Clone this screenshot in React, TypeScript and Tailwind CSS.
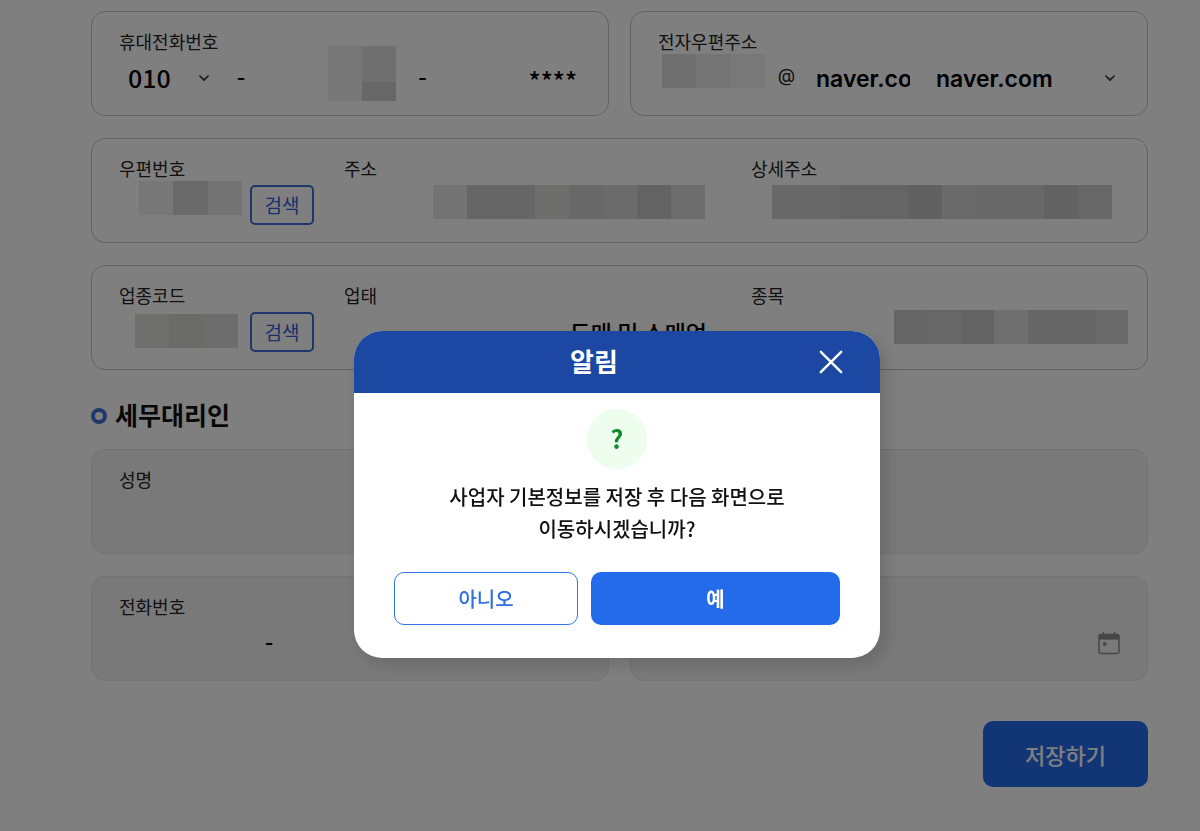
import { useState } from "react";
import type { ReactNode } from "react";

const INPUT = "h-10 min-w-0 bg-transparent text-black outline-none";

function IconChevron() {
  return (
    <svg
      width={12}
      height={8}
      viewBox="0 0 12 8"
      fill="none"
      aria-hidden
      className="pointer-events-none absolute top-4 right-1 text-[#444]"
      stroke="currentColor"
      strokeWidth={1.8}
      strokeLinecap="round"
      strokeLinejoin="round"
    >
      <path d="M2 2.2 6 6l4-3.8" />
    </svg>
  );
}

function IconCalendar() {
  return (
    <svg width={22} height={24} viewBox="0 0 22 24" fill="none" aria-hidden className="text-[#8c8c8c]">
      <rect x="1" y="3.5" width="20" height="19" rx="2" stroke="currentColor" strokeWidth="1.5" />
      <path d="M1 4h20v4.6H1z" fill="currentColor" />
      <path d="M5.5 1v4M16.5 1v4" stroke="currentColor" strokeWidth="1.5" />
      <circle cx="6.8" cy="13" r="1.9" fill="currentColor" />
    </svg>
  );
}

function IconClose() {
  return (
    <svg
      width={24}
      height={24}
      viewBox="0 0 24 24"
      fill="none"
      aria-hidden
      stroke="currentColor"
      strokeWidth={2.4}
      strokeLinecap="round"
    >
      <path d="M1.8 1.8l20.4 20.4M22.2 1.8L1.8 22.2" />
    </svg>
  );
}

/** Masked personal data: a row of flat blocks over the value */
function Mask({ cells, className }: { cells: string[]; className: string }) {
  return (
    <span className={`pointer-events-none absolute flex ${className}`} aria-hidden>
      {cells.map((cell, i) => (
        <span key={i} className={`flex-1 ${cell}`} />
      ))}
    </span>
  );
}

function Card({ children, disabled }: { children?: ReactNode; disabled?: boolean }) {
  return (
    <div
      className={`min-h-[105px] min-w-0 rounded-[14px] border px-[27px] pt-4 ${
        disabled ? "border-[#e6e6e6] bg-[#f3f3f3]" : "border-[#c4c4c4] bg-white"
      }`}
    >
      {children}
    </div>
  );
}

function Label({ htmlFor, children }: { htmlFor: string; children: ReactNode }) {
  return (
    <label htmlFor={htmlFor} className="mb-1 block text-[18px] leading-[26px] text-[#222]">
      {children}
    </label>
  );
}

function Dash() {
  return <span className="w-[54px] pb-1 text-center text-[24px] leading-8 font-medium">-</span>;
}

function SearchButton() {
  return (
    <button
      type="button"
      className="h-10 w-16 shrink-0 rounded-[5px] border-2 border-[#3a6fd8] text-[19px] leading-[34px] text-[#2f63d6]"
    >
      검색
    </button>
  );
}

function ConfirmDialog({ onClose }: { onClose: () => void }) {
  return (
    <div className="fixed inset-0 z-10 flex items-start justify-center overflow-hidden bg-black/50 pt-[331px] pl-[34px]">
      <div
        role="dialog"
        aria-modal="true"
        aria-labelledby="dialog-title"
        className="w-[526px] overflow-hidden rounded-[28px] bg-white shadow-[6px_6px_16px_0px_rgba(0,0,0,0.15)]"
      >
        <div className="flex h-[62px] items-center gap-[22px] bg-[#1c48a4] px-[37px] text-white">
          <h2 id="dialog-title" className="flex-1 pb-1 text-center text-[26px] font-bold">
            알림
          </h2>
          <button type="button" aria-label="닫기" onClick={onClose}>
            <IconClose />
          </button>
        </div>
        <div className="px-10 pt-4 pb-[33px] text-center">
          <div className="mx-auto flex size-[60px] items-center justify-center rounded-full bg-[#edfdee] text-[25px] font-bold text-[#108a2c]">
            ?
          </div>
          <p className="mt-3 text-[20px] leading-8 font-medium text-[#111]">
            사업자 기본정보를 저장 후 다음 화면으로
            <br />
            이동하시겠습니까?
          </p>
          <div className="mt-[27px] flex gap-[13px] text-[20px]">
            <button
              type="button"
              onClick={onClose}
              className="h-[53px] w-[184px] rounded-[10px] border border-[#2f76e8] font-medium text-[#2f6fe0]"
            >
              아니오
            </button>
            <button
              type="button"
              onClick={onClose}
              className="h-[53px] flex-1 rounded-[10px] bg-[#246beb] font-bold text-white"
            >
              예
            </button>
          </div>
        </div>
      </div>
    </div>
  );
}

export default function App() {
  const [open, setOpen] = useState(true);

  return (
    <div className="min-h-screen bg-white font-['Noto_Sans_CJK_KR',sans-serif]">
      <main className="pt-[11px] pr-[52px] pb-11 pl-[91px]">
        <div className="grid grid-cols-2 gap-[21px]">
          <Card>
            <Label htmlFor="mobile">휴대전화번호</Label>
            <div className="flex items-center text-[25px] font-medium">
              <div className="relative w-[95px] shrink-0">
                <select id="mobile" className={`${INPUT} w-full appearance-none pl-[9px]`}>
                  <option>010</option>
                </select>
                <IconChevron />
              </div>
              <Dash />
              <div className="relative min-w-0 flex-1">
                <input aria-label="휴대전화번호 가운데 자리" className={`${INPUT} w-full`} />
                <Mask
                  className="-top-3 right-0 h-[55px] w-[68px]"
                  cells={["bg-[#efefef]", "bg-linear-to-b from-[#e0e0e0] from-65% to-[#cfcfcf] to-65%"]}
                />
              </div>
              <Dash />
              <input
                aria-label="휴대전화번호 끝자리"
                defaultValue="****"
                className={`${INPUT} flex-1 pt-1 pr-1 text-right`}
              />
            </div>
          </Card>

          <Card>
            <Label htmlFor="email">전자우편주소</Label>
            <div className="flex items-center font-['Inter','Noto_Sans_CJK_KR',sans-serif] text-[23px] font-semibold">
              <div className="relative w-[107px] shrink-0">
                <input id="email" className={`${INPUT} w-full`} />
                <Mask
                  className="-top-1 right-0 h-[34px] w-[103px]"
                  cells={["bg-[#dedede]", "bg-[#e9e9e9]", "bg-[#f0f0f0]"]}
                />
              </div>
              <span className="w-[43px] pb-1 text-center text-[18px] leading-8 font-normal text-[#222]">@</span>
              <input
                aria-label="전자우편 도메인"
                defaultValue="naver.com"
                className={`${INPUT} w-[102px] pt-0.5 pl-2`}
              />
              <div className="relative ml-[18px] min-w-0 flex-1">
                <select
                  aria-label="도메인 선택"
                  className={`${INPUT} w-full appearance-none pt-0.5 pl-2`}
                >
                  <option>naver.com</option>
                </select>
                <IconChevron />
              </div>
            </div>
          </Card>
        </div>

        <div className="mt-[22px] grid gap-[22px]">
          <Card>
            <div className="grid grid-cols-[195px_377fr_369fr] gap-x-[30px]">
              <div>
                <Label htmlFor="zip">우편번호</Label>
                <div className="flex gap-2">
                  <div className="relative min-w-0 flex-1">
                    <input id="zip" className={`${INPUT} w-full`} />
                    <Mask
                      className="-top-1 right-0 h-[34px] w-[103px]"
                      cells={["bg-[#eeeeee]", "bg-[#d5d5d5]", "bg-[#e6e6e6]"]}
                    />
                  </div>
                  <SearchButton />
                </div>
              </div>
              <div>
                <Label htmlFor="addr">주소</Label>
                <div className="relative">
                  <input id="addr" className={`${INPUT} w-full`} />
                  <Mask
                    className="top-0 right-4 h-[34px] w-[272px]"
                    cells={[
                      "bg-[#e6e6e6]",
                      "bg-[#cccccc]",
                      "bg-[#cccccc]",
                      "bg-[#dddcd8]",
                      "bg-[#d0d0d0]",
                      "bg-[#d7d7d7]",
                      "bg-[#c6c6c6]",
                      "bg-[#dadada]",
                    ]}
                  />
                </div>
              </div>
              <div>
                <Label htmlFor="addr-detail">상세주소</Label>
                <div className="relative">
                  <input id="addr-detail" className={`${INPUT} w-full`} />
                  <Mask
                    className="top-0 right-2 h-[34px] w-[340px]"
                    cells={[
                      "bg-[#d0d0d0]",
                      "bg-[#d0d0d0]",
                      "bg-[#cacaca]",
                      "bg-[#cacaca]",
                      "bg-[#c2c2c2]",
                      "bg-[#d4d4d4]",
                      "bg-[#d0d0d0]",
                      "bg-[#d0d0d0]",
                      "bg-[#c4c4c4]",
                      "bg-[#cecece]",
                    ]}
                  />
                </div>
              </div>
            </div>
          </Card>

          <Card>
            <div className="grid grid-cols-[195px_377fr_369fr] gap-x-[30px]">
              <div>
                <Label htmlFor="biz-code">업종코드</Label>
                <div className="flex gap-2">
                  <div className="relative min-w-0 flex-1">
                    <input id="biz-code" className={`${INPUT} w-full`} />
                    <Mask
                      className="top-0.5 right-1 h-[34px] w-[103px]"
                      cells={["bg-[#dfdfdd]", "bg-[#d6d6d5]", "bg-[#dbdbdb]"]}
                    />
                  </div>
                  <SearchButton />
                </div>
              </div>
              <div>
                <Label htmlFor="biz-type">업태</Label>
                <input
                  id="biz-type"
                  defaultValue="도매 및 소매업"
                  className={`${INPUT} w-full pr-[14px] text-right text-[23px] font-medium`}
                />
              </div>
              <div>
                <Label htmlFor="biz-item">종목</Label>
                <div className="relative">
                  <input id="biz-item" className={`${INPUT} w-full`} />
                  <Mask
                    className="-top-0.5 -right-2 h-[34px] w-[234px]"
                    cells={[
                      "bg-[#cbcbcb]",
                      "bg-[#d0d0d0]",
                      "bg-[#c7c7c7]",
                      "bg-[#dedede]",
                      "bg-[#cdcdcd]",
                      "bg-[#cdcdcd]",
                      "bg-[#d3d3d3]",
                    ]}
                  />
                </div>
              </div>
            </div>
          </Card>
        </div>

        <h2 className="flex h-[79px] items-center gap-2 text-[25px] leading-8 font-bold text-[#111]">
          <span className="mt-3 size-4 rounded-full border-4 border-[#3f71d8]" />
          <span className="mt-2">세무대리인</span>
        </h2>

        <div className="grid grid-cols-2 gap-x-[21px] gap-y-[22px]">
          <Card disabled>
            <Label htmlFor="agent-name">성명</Label>
            <input id="agent-name" disabled className={`${INPUT} w-full`} />
          </Card>
          <Card disabled />
          <Card disabled>
            <Label htmlFor="agent-tel">전화번호</Label>
            <div className="flex items-center">
              <input id="agent-tel" disabled className={`${INPUT} w-[123px]`} />
              <Dash />
              <input aria-label="전화번호 뒷자리" disabled className={`${INPUT} flex-1`} />
            </div>
          </Card>
          <Card disabled>
            <div className="mt-[30px] flex items-center">
              <input aria-label="관리 일자" disabled className={`${INPUT} flex-1`} />
              <button type="button" aria-label="달력 열기" disabled>
                <IconCalendar />
              </button>
            </div>
          </Card>
        </div>

        <div className="mt-10 flex justify-end">
          <button
            type="button"
            onClick={() => setOpen(true)}
            className="h-[66px] w-[165px] rounded-[10px] bg-[#246beb] text-[22px] font-medium text-white"
          >
            저장하기
          </button>
        </div>
      </main>

      {open && <ConfirmDialog onClose={() => setOpen(false)} />}
    </div>
  );
}
